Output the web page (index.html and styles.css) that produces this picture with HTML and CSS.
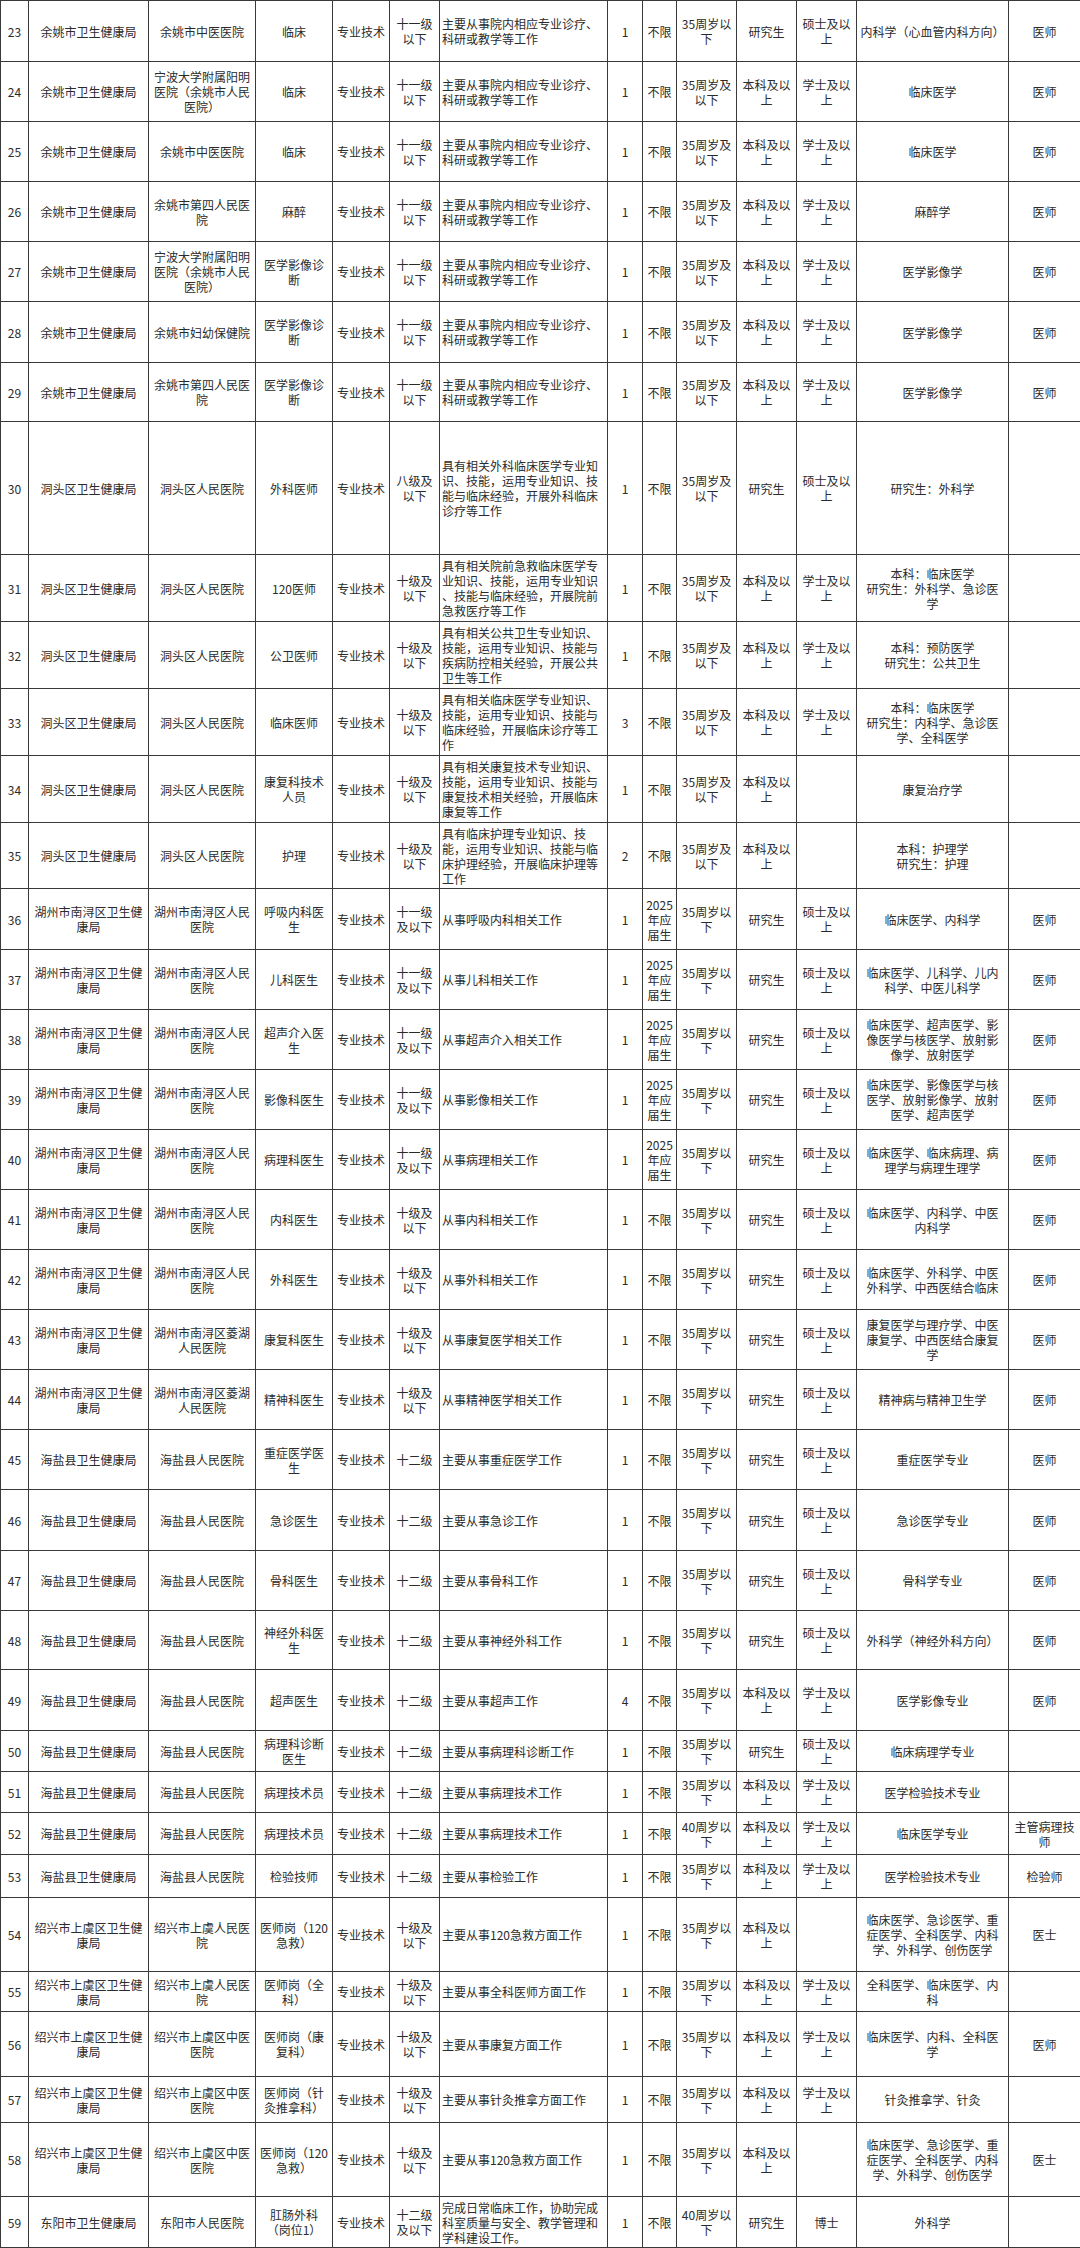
FILE: index.html
```html
<!DOCTYPE html>
<html lang="zh-CN">
<head>
<meta charset="utf-8">
<title>招聘岗位表</title>
<link rel="stylesheet" href="styles.css">
</head>
<body>
<table class="grid">
<colgroup>
<col class="c1"><col class="c2"><col class="c3"><col class="c4"><col class="c5"><col class="c6"><col class="c7"><col class="c8"><col class="c9"><col class="c10"><col class="c11"><col class="c12"><col class="c13"><col class="c14">
</colgroup>
<tbody>
<tr class="r61"><td>23</td><td>余姚市卫生健康局</td><td>余姚市中医医院</td><td>临床</td><td>专业技术</td><td>十一级<br>以下</td><td class="l">主要从事院内相应专业诊疗、<br>科研或教学等工作</td><td>1</td><td>不限</td><td>35周岁以<br>下</td><td>研究生</td><td>硕士及以<br>上</td><td>内科学（心血管内科方向）</td><td>医师</td></tr>
<tr class="r60"><td>24</td><td>余姚市卫生健康局</td><td>宁波大学附属阳明<br>医院（余姚市人民<br>医院）</td><td>临床</td><td>专业技术</td><td>十一级<br>以下</td><td class="l">主要从事院内相应专业诊疗、<br>科研或教学等工作</td><td>1</td><td>不限</td><td>35周岁及<br>以下</td><td>本科及以<br>上</td><td>学士及以<br>上</td><td>临床医学</td><td>医师</td></tr>
<tr class="r60"><td>25</td><td>余姚市卫生健康局</td><td>余姚市中医医院</td><td>临床</td><td>专业技术</td><td>十一级<br>以下</td><td class="l">主要从事院内相应专业诊疗、<br>科研或教学等工作</td><td>1</td><td>不限</td><td>35周岁及<br>以下</td><td>本科及以<br>上</td><td>学士及以<br>上</td><td>临床医学</td><td>医师</td></tr>
<tr class="r60"><td>26</td><td>余姚市卫生健康局</td><td>余姚市第四人民医<br>院</td><td>麻醉</td><td>专业技术</td><td>十一级<br>以下</td><td class="l">主要从事院内相应专业诊疗、<br>科研或教学等工作</td><td>1</td><td>不限</td><td>35周岁及<br>以下</td><td>本科及以<br>上</td><td>学士及以<br>上</td><td>麻醉学</td><td>医师</td></tr>
<tr class="r60"><td>27</td><td>余姚市卫生健康局</td><td>宁波大学附属阳明<br>医院（余姚市人民<br>医院）</td><td>医学影像诊<br>断</td><td>专业技术</td><td>十一级<br>以下</td><td class="l">主要从事院内相应专业诊疗、<br>科研或教学等工作</td><td>1</td><td>不限</td><td>35周岁及<br>以下</td><td>本科及以<br>上</td><td>学士及以<br>上</td><td>医学影像学</td><td>医师</td></tr>
<tr class="r61"><td>28</td><td>余姚市卫生健康局</td><td>余姚市妇幼保健院</td><td>医学影像诊<br>断</td><td>专业技术</td><td>十一级<br>以下</td><td class="l">主要从事院内相应专业诊疗、<br>科研或教学等工作</td><td>1</td><td>不限</td><td>35周岁及<br>以下</td><td>本科及以<br>上</td><td>学士及以<br>上</td><td>医学影像学</td><td>医师</td></tr>
<tr class="r59"><td>29</td><td>余姚市卫生健康局</td><td>余姚市第四人民医<br>院</td><td>医学影像诊<br>断</td><td>专业技术</td><td>十一级<br>以下</td><td class="l">主要从事院内相应专业诊疗、<br>科研或教学等工作</td><td>1</td><td>不限</td><td>35周岁及<br>以下</td><td>本科及以<br>上</td><td>学士及以<br>上</td><td>医学影像学</td><td>医师</td></tr>
<tr class="r133"><td>30</td><td>洞头区卫生健康局</td><td>洞头区人民医院</td><td>外科医师</td><td>专业技术</td><td>八级及<br>以下</td><td class="l">具有相关外科临床医学专业知<br>识、技能，运用专业知识、技<br>能与临床经验，开展外科临床<br>诊疗等工作</td><td>1</td><td>不限</td><td>35周岁及<br>以下</td><td>研究生</td><td>硕士及以<br>上</td><td>研究生：外科学</td><td></td></tr>
<tr class="r67"><td>31</td><td>洞头区卫生健康局</td><td>洞头区人民医院</td><td>120医师</td><td>专业技术</td><td>十级及<br>以下</td><td class="l">具有相关院前急救临床医学专<br>业知识、技能，运用专业知识<br>、技能与临床经验，开展院前<br>急救医疗等工作</td><td>1</td><td>不限</td><td>35周岁及<br>以下</td><td>本科及以<br>上</td><td>学士及以<br>上</td><td>本科：临床医学<br>研究生：外科学、急诊医<br>学</td><td></td></tr>
<tr class="r67"><td>32</td><td>洞头区卫生健康局</td><td>洞头区人民医院</td><td>公卫医师</td><td>专业技术</td><td>十级及<br>以下</td><td class="l">具有相关公共卫生专业知识、<br>技能，运用专业知识、技能与<br>疾病防控相关经验，开展公共<br>卫生等工作</td><td>1</td><td>不限</td><td>35周岁及<br>以下</td><td>本科及以<br>上</td><td>学士及以<br>上</td><td>本科：预防医学<br>研究生：公共卫生</td><td></td></tr>
<tr class="r67"><td>33</td><td>洞头区卫生健康局</td><td>洞头区人民医院</td><td>临床医师</td><td>专业技术</td><td>十级及<br>以下</td><td class="l">具有相关临床医学专业知识、<br>技能，运用专业知识、技能与<br>临床经验，开展临床诊疗等工<br>作</td><td>3</td><td>不限</td><td>35周岁及<br>以下</td><td>本科及以<br>上</td><td>学士及以<br>上</td><td>本科：临床医学<br>研究生：内科学、急诊医<br>学、全科医学</td><td></td></tr>
<tr class="r67"><td>34</td><td>洞头区卫生健康局</td><td>洞头区人民医院</td><td>康复科技术<br>人员</td><td>专业技术</td><td>十级及<br>以下</td><td class="l">具有相关康复技术专业知识、<br>技能，运用专业知识、技能与<br>康复技术相关经验，开展临床<br>康复等工作</td><td>1</td><td>不限</td><td>35周岁及<br>以下</td><td>本科及以<br>上</td><td></td><td>康复治疗学</td><td></td></tr>
<tr class="r66"><td>35</td><td>洞头区卫生健康局</td><td>洞头区人民医院</td><td>护理</td><td>专业技术</td><td>十级及<br>以下</td><td class="l">具有临床护理专业知识、技<br>能，运用专业知识、技能与临<br>床护理经验，开展临床护理等<br>工作</td><td>2</td><td>不限</td><td>35周岁及<br>以下</td><td>本科及以<br>上</td><td></td><td>本科：护理学<br>研究生：护理</td><td></td></tr>
<tr class="r61"><td>36</td><td>湖州市南浔区卫生健<br>康局</td><td>湖州市南浔区人民<br>医院</td><td>呼吸内科医<br>生</td><td>专业技术</td><td>十一级<br>及以下</td><td class="l">从事呼吸内科相关工作</td><td>1</td><td>2025<br>年应<br>届生</td><td>35周岁以<br>下</td><td>研究生</td><td>硕士及以<br>上</td><td>临床医学、内科学</td><td>医师</td></tr>
<tr class="r60"><td>37</td><td>湖州市南浔区卫生健<br>康局</td><td>湖州市南浔区人民<br>医院</td><td>儿科医生</td><td>专业技术</td><td>十一级<br>及以下</td><td class="l">从事儿科相关工作</td><td>1</td><td>2025<br>年应<br>届生</td><td>35周岁以<br>下</td><td>研究生</td><td>硕士及以<br>上</td><td>临床医学、儿科学、儿内<br>科学、中医儿科学</td><td>医师</td></tr>
<tr class="r60"><td>38</td><td>湖州市南浔区卫生健<br>康局</td><td>湖州市南浔区人民<br>医院</td><td>超声介入医<br>生</td><td>专业技术</td><td>十一级<br>及以下</td><td class="l">从事超声介入相关工作</td><td>1</td><td>2025<br>年应<br>届生</td><td>35周岁以<br>下</td><td>研究生</td><td>硕士及以<br>上</td><td>临床医学、超声医学、影<br>像医学与核医学、放射影<br>像学、放射医学</td><td>医师</td></tr>
<tr class="r60"><td>39</td><td>湖州市南浔区卫生健<br>康局</td><td>湖州市南浔区人民<br>医院</td><td>影像科医生</td><td>专业技术</td><td>十一级<br>及以下</td><td class="l">从事影像相关工作</td><td>1</td><td>2025<br>年应<br>届生</td><td>35周岁以<br>下</td><td>研究生</td><td>硕士及以<br>上</td><td>临床医学、影像医学与核<br>医学、放射影像学、放射<br>医学、超声医学</td><td>医师</td></tr>
<tr class="r60"><td>40</td><td>湖州市南浔区卫生健<br>康局</td><td>湖州市南浔区人民<br>医院</td><td>病理科医生</td><td>专业技术</td><td>十一级<br>及以下</td><td class="l">从事病理相关工作</td><td>1</td><td>2025<br>年应<br>届生</td><td>35周岁以<br>下</td><td>研究生</td><td>硕士及以<br>上</td><td>临床医学、临床病理、病<br>理学与病理生理学</td><td>医师</td></tr>
<tr class="r60"><td>41</td><td>湖州市南浔区卫生健<br>康局</td><td>湖州市南浔区人民<br>医院</td><td>内科医生</td><td>专业技术</td><td>十级及<br>以下</td><td class="l">从事内科相关工作</td><td>1</td><td>不限</td><td>35周岁以<br>下</td><td>研究生</td><td>硕士及以<br>上</td><td>临床医学、内科学、中医<br>内科学</td><td>医师</td></tr>
<tr class="r60"><td>42</td><td>湖州市南浔区卫生健<br>康局</td><td>湖州市南浔区人民<br>医院</td><td>外科医生</td><td>专业技术</td><td>十级及<br>以下</td><td class="l">从事外科相关工作</td><td>1</td><td>不限</td><td>35周岁以<br>下</td><td>研究生</td><td>硕士及以<br>上</td><td>临床医学、外科学、中医<br>外科学、中西医结合临床</td><td>医师</td></tr>
<tr class="r60"><td>43</td><td>湖州市南浔区卫生健<br>康局</td><td>湖州市南浔区菱湖<br>人民医院</td><td>康复科医生</td><td>专业技术</td><td>十级及<br>以下</td><td class="l">从事康复医学相关工作</td><td>1</td><td>不限</td><td>35周岁以<br>下</td><td>研究生</td><td>硕士及以<br>上</td><td>康复医学与理疗学、中医<br>康复学、中西医结合康复<br>学</td><td>医师</td></tr>
<tr class="r60"><td>44</td><td>湖州市南浔区卫生健<br>康局</td><td>湖州市南浔区菱湖<br>人民医院</td><td>精神科医生</td><td>专业技术</td><td>十级及<br>以下</td><td class="l">从事精神医学相关工作</td><td>1</td><td>不限</td><td>35周岁以<br>下</td><td>研究生</td><td>硕士及以<br>上</td><td>精神病与精神卫生学</td><td>医师</td></tr>
<tr class="r60"><td>45</td><td>海盐县卫生健康局</td><td>海盐县人民医院</td><td>重症医学医<br>生</td><td>专业技术</td><td>十二级</td><td class="l">主要从事重症医学工作</td><td>1</td><td>不限</td><td>35周岁以<br>下</td><td>研究生</td><td>硕士及以<br>上</td><td>重症医学专业</td><td>医师</td></tr>
<tr class="r61"><td>46</td><td>海盐县卫生健康局</td><td>海盐县人民医院</td><td>急诊医生</td><td>专业技术</td><td>十二级</td><td class="l">主要从事急诊工作</td><td>1</td><td>不限</td><td>35周岁以<br>下</td><td>研究生</td><td>硕士及以<br>上</td><td>急诊医学专业</td><td>医师</td></tr>
<tr class="r60"><td>47</td><td>海盐县卫生健康局</td><td>海盐县人民医院</td><td>骨科医生</td><td>专业技术</td><td>十二级</td><td class="l">主要从事骨科工作</td><td>1</td><td>不限</td><td>35周岁以<br>下</td><td>研究生</td><td>硕士及以<br>上</td><td>骨科学专业</td><td>医师</td></tr>
<tr class="r59"><td>48</td><td>海盐县卫生健康局</td><td>海盐县人民医院</td><td>神经外科医<br>生</td><td>专业技术</td><td>十二级</td><td class="l">主要从事神经外科工作</td><td>1</td><td>不限</td><td>35周岁以<br>下</td><td>研究生</td><td>硕士及以<br>上</td><td>外科学（神经外科方向）</td><td>医师</td></tr>
<tr class="r61"><td>49</td><td>海盐县卫生健康局</td><td>海盐县人民医院</td><td>超声医生</td><td>专业技术</td><td>十二级</td><td class="l">主要从事超声工作</td><td>4</td><td>不限</td><td>35周岁以<br>下</td><td>本科及以<br>上</td><td>学士及以<br>上</td><td>医学影像专业</td><td>医师</td></tr>
<tr class="r41"><td>50</td><td>海盐县卫生健康局</td><td>海盐县人民医院</td><td>病理科诊断<br>医生</td><td>专业技术</td><td>十二级</td><td class="l">主要从事病理科诊断工作</td><td>1</td><td>不限</td><td>35周岁以<br>下</td><td>研究生</td><td>硕士及以<br>上</td><td>临床病理学专业</td><td></td></tr>
<tr class="r41"><td>51</td><td>海盐县卫生健康局</td><td>海盐县人民医院</td><td>病理技术员</td><td>专业技术</td><td>十二级</td><td class="l">主要从事病理技术工作</td><td>1</td><td>不限</td><td>35周岁以<br>下</td><td>本科及以<br>上</td><td>学士及以<br>上</td><td>医学检验技术专业</td><td></td></tr>
<tr class="r42"><td>52</td><td>海盐县卫生健康局</td><td>海盐县人民医院</td><td>病理技术员</td><td>专业技术</td><td>十二级</td><td class="l">主要从事病理技术工作</td><td>1</td><td>不限</td><td>40周岁以<br>下</td><td>本科及以<br>上</td><td>学士及以<br>上</td><td>临床医学专业</td><td>主管病理技<br>师</td></tr>
<tr class="r43"><td>53</td><td>海盐县卫生健康局</td><td>海盐县人民医院</td><td>检验技师</td><td>专业技术</td><td>十二级</td><td class="l">主要从事检验工作</td><td>1</td><td>不限</td><td>35周岁以<br>下</td><td>本科及以<br>上</td><td>学士及以<br>上</td><td>医学检验技术专业</td><td>检验师</td></tr>
<tr class="r74"><td>54</td><td>绍兴市上虞区卫生健<br>康局</td><td>绍兴市上虞人民医<br>院</td><td>医师岗（120<br>急救）</td><td>专业技术</td><td>十级及<br>以下</td><td class="l">主要从事120急救方面工作</td><td>1</td><td>不限</td><td>35周岁以<br>下</td><td>本科及以<br>上</td><td></td><td>临床医学、急诊医学、重<br>症医学、全科医学、内科<br>学、外科学、创伤医学</td><td>医士</td></tr>
<tr class="r40"><td>55</td><td>绍兴市上虞区卫生健<br>康局</td><td>绍兴市上虞人民医<br>院</td><td>医师岗（全<br>科）</td><td>专业技术</td><td>十级及<br>以下</td><td class="l">主要从事全科医师方面工作</td><td>1</td><td>不限</td><td>35周岁以<br>下</td><td>本科及以<br>上</td><td>学士及以<br>上</td><td>全科医学、临床医学、内<br>科</td><td></td></tr>
<tr class="r65"><td>56</td><td>绍兴市上虞区卫生健<br>康局</td><td>绍兴市上虞区中医<br>医院</td><td>医师岗（康<br>复科）</td><td>专业技术</td><td>十级及<br>以下</td><td class="l">主要从事康复方面工作</td><td>1</td><td>不限</td><td>35周岁以<br>下</td><td>本科及以<br>上</td><td>学士及以<br>上</td><td>临床医学、内科、全科医<br>学</td><td>医师</td></tr>
<tr class="r46"><td>57</td><td>绍兴市上虞区卫生健<br>康局</td><td>绍兴市上虞区中医<br>医院</td><td>医师岗（针<br>灸推拿科）</td><td>专业技术</td><td>十级及<br>以下</td><td class="l">主要从事针灸推拿方面工作</td><td>1</td><td>不限</td><td>35周岁以<br>下</td><td>本科及以<br>上</td><td>学士及以<br>上</td><td>针灸推拿学、针灸</td><td></td></tr>
<tr class="r74"><td>58</td><td>绍兴市上虞区卫生健<br>康局</td><td>绍兴市上虞区中医<br>医院</td><td>医师岗（120<br>急救）</td><td>专业技术</td><td>十级及<br>以下</td><td class="l">主要从事120急救方面工作</td><td>1</td><td>不限</td><td>35周岁以<br>下</td><td>本科及以<br>上</td><td></td><td>临床医学、急诊医学、重<br>症医学、全科医学、内科<br>学、外科学、创伤医学</td><td>医士</td></tr>
<tr class="r51"><td>59</td><td>东阳市卫生健康局</td><td>东阳市人民医院</td><td>肛肠外科<br>（岗位1）</td><td>专业技术</td><td>十二级<br>及以下</td><td class="l">完成日常临床工作，协助完成<br>科室质量与安全、教学管理和<br>学科建设工作。</td><td>1</td><td>不限</td><td>40周岁以<br>下</td><td>研究生</td><td>博士</td><td>外科学</td><td></td></tr>
</tbody>
</table>
</body>
</html>
```

FILE: styles.css
```css
html, body {
  margin: 0;
  padding: 0;
  background: #ffffff;
}

body {
  width: 1080px;
  font-family: "Noto Sans CJK SC", "Noto Sans", sans-serif;
  font-size: 12px;
  line-height: 15px;
  color: #2b2b2b;
}

.grid {
  width: 1080px;
  table-layout: fixed;
  border-collapse: collapse;
}

.grid td {
  border: 1px solid #3a3a3a;
  padding: 0 2px;
  text-align: center;
  vertical-align: middle;
  white-space: nowrap;
  overflow: visible;
}

.grid td.l {
  text-align: left;
}

.c1 { width: 28px; }
.c2 { width: 120px; }
.c3 { width: 107px; }
.c4 { width: 77px; }
.c5 { width: 57px; }
.c6 { width: 50px; }
.c7 { width: 168px; }
.c8 { width: 35px; }
.c9 { width: 34px; }
.c10 { width: 60px; }
.c11 { width: 60px; }
.c12 { width: 60px; }
.c13 { width: 152px; }
.c14 { width: 72px; }

.r40 td { height: 39px; }
.r41 td { height: 40px; }
.r42 td { height: 41px; }
.r43 td { height: 42px; }
.r46 td { height: 45px; }
.r51 td { height: 50px; }
.r59 td { height: 58px; }
.r60 td { height: 59px; }
.r61 td { height: 60px; }
.r65 td { height: 64px; }
.r66 td { height: 65px; }
.r67 td { height: 66px; }
.r74 td { height: 73px; }
.r133 td { height: 132px; }
```
